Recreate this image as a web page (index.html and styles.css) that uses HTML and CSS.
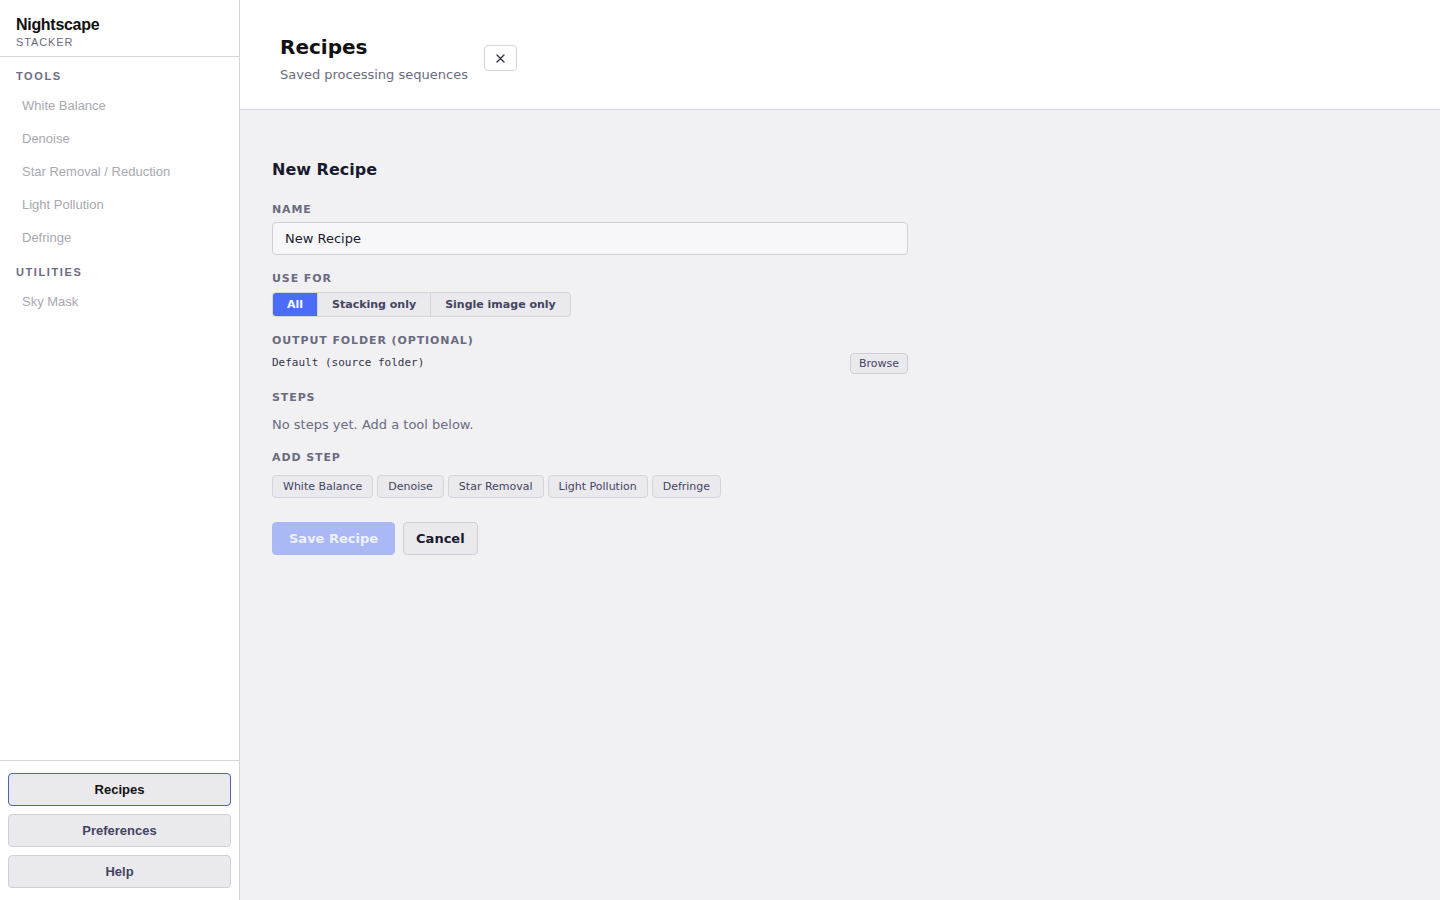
FILE: index.html
```html
<!DOCTYPE html>
<html>
<head>
<meta charset="utf-8">
<link rel="stylesheet" href="styles.css">
</head>
<body>
<div class="app">
  <aside class="sidebar">
    <div class="brand">
      <div class="brand-name">Nightscape</div>
      <div class="brand-sub">STACKER</div>
    </div>
    <nav class="nav">
      <div class="nav-head">TOOLS</div>
      <div class="nav-item">White Balance</div>
      <div class="nav-item">Denoise</div>
      <div class="nav-item">Star Removal / Reduction</div>
      <div class="nav-item">Light Pollution</div>
      <div class="nav-item">Defringe</div>
      <div class="nav-head">UTILITIES</div>
      <div class="nav-item">Sky Mask</div>
    </nav>
    <div class="side-foot">
      <button class="side-btn active">Recipes</button>
      <button class="side-btn">Preferences</button>
      <button class="side-btn">Help</button>
    </div>
  </aside>
  <main class="main">
    <header class="top">
      <div class="top-text">
        <h1 class="title">Recipes</h1>
        <div class="subtitle">Saved processing sequences</div>
      </div>
      <button class="close-btn" aria-label="Close"><svg width="9" height="9" viewBox="0 0 9 9"><path d="M1 1L8 8M8 1L1 8" stroke="#33334a" stroke-width="1.4" stroke-linecap="round"/></svg></button>
    </header>
    <section class="content">
      <div class="form">
        <h2 class="form-title">New Recipe</h2>
        <div class="field">
          <div class="label">NAME</div>
          <div class="input">New Recipe</div>
        </div>
        <div class="field">
          <div class="label">USE FOR</div>
          <div class="seg">
            <span class="seg-item on">All</span>
            <span class="seg-item">Stacking only</span>
            <span class="seg-item">Single image only</span>
          </div>
        </div>
        <div class="field">
          <div class="label">OUTPUT FOLDER (OPTIONAL)</div>
          <div class="folder-row">
            <span class="mono">Default (source folder)</span>
            <button class="small-btn">Browse</button>
          </div>
        </div>
        <div class="field">
          <div class="label">STEPS</div>
          <div class="empty">No steps yet. Add a tool below.</div>
        </div>
        <div class="field">
          <div class="label">ADD STEP</div>
          <div class="chips">
            <button class="chip">White Balance</button>
            <button class="chip">Denoise</button>
            <button class="chip">Star Removal</button>
            <button class="chip">Light Pollution</button>
            <button class="chip">Defringe</button>
          </div>
        </div>
        <div class="actions">
          <button class="btn primary">Save Recipe</button>
          <button class="btn">Cancel</button>
        </div>
      </div>
    </section>
  </main>
</div>
</body>
</html>
```
FILE: styles.css
```css
* { box-sizing: border-box; }
html, body { margin: 0; padding: 0; height: 100%; }
body { font-family: "DejaVu Sans", sans-serif; color: #1a1a2e; }
button { font-family: inherit; cursor: pointer; }
.app { display: flex; height: 900px; }

.sidebar {
  width: 240px; flex: none; background: #fff; border-right: 1px solid #d4d4dc;
  display: flex; flex-direction: column;
  font-family: "Liberation Sans", Arial, sans-serif;
}
.brand { padding: 15px 16px 8px; border-bottom: 1px solid #d4d4dc; height: 57px; }
.brand-name { font-size: 16px; font-weight: 700; color: #111; line-height: 19px; letter-spacing: -0.3px; }
.brand-sub { font-size: 11px; color: #6b6b85; letter-spacing: 0.9px; line-height: 14px; margin-top: 1px; }
.nav { flex: 1; padding-top: 12px; }
.nav-head { font-size: 11px; font-weight: 700; color: #6b6b85; letter-spacing: 1.6px; padding: 0 16px; height: 15px; line-height: 15px; margin-bottom: 5px; }
.nav-item { font-size: 13px; color: #a8a8b0; padding: 0 22px; height: 33px; line-height: 33px; }
.nav-item + .nav-head { margin-top: 11px; }
.side-foot { border-top: 1px solid #d4d4dc; padding: 12px 8px 12px; display: flex; flex-direction: column; gap: 8px; }
.side-btn {
  height: 33px; background: #e9e9ee; border: 1px solid #cfcfd8; border-radius: 4px;
  font-family: "Liberation Sans", Arial, sans-serif; font-size: 13px; font-weight: 700; color: #44445e;
}
.side-btn.active { border-color: #4f63a8; color: #111; }

.main { flex: 1; display: flex; flex-direction: column; background: #f1f1f4; }
.top { height: 110px; flex: none; background: #fff; border-bottom: 1px solid #d4d4dc; display: flex; align-items: flex-start; padding: 35px 40px 0; gap: 16px; }
.title { margin: 0; font-size: 20px; font-weight: 700; line-height: 24px; color: #111; }
.subtitle { font-size: 13px; color: #6b6b80; margin-top: 8px; line-height: 16px; }
.close-btn { margin-top: 10px; width: 33px; height: 26px; background: #fff; border: 1px solid #d4d4dc; border-radius: 4px; padding: 0; display: flex; align-items: center; justify-content: center; }

.content { padding: 50px 32px; }
.form { width: 636px; }
.form-title { margin: 0 0 22px; font-size: 16px; font-weight: 700; line-height: 20px; color: #1a1a2e; }
.field { margin-bottom: 16px; }
.label { font-size: 11px; font-weight: 700; color: #6b6b80; letter-spacing: 0.9px; line-height: 14px; padding-top: 1px; margin-bottom: 5px; }
.input { height: 33px; background: #f7f7f9; border: 1px solid #cfcfd8; border-radius: 4px; padding: 0 12px; font-size: 13px; line-height: 31px; color: #1a1a2e; }
.seg { display: inline-flex; border: 1px solid #d4d4dc; border-radius: 4px; overflow: hidden; height: 25px; background: #e9e9ee; margin-top: 1px; vertical-align: top; }
.seg-item { font-size: 11px; font-weight: 700; color: #44445e; padding: 0 14px; line-height: 23px; }
.seg-item + .seg-item { border-left: 1px solid #d4d4dc; }
.seg-item.on { background: #4a6cf7; color: #fff; }
.folder-row { display: flex; justify-content: space-between; align-items: center; }
.mono { font-family: "DejaVu Sans Mono", monospace; font-size: 11px; color: #33334a; margin-top: -3px; }
.small-btn { height: 21px; padding: 0 8px; font-size: 11px; background: #e9e9ee; border: 1px solid #cfcfd8; border-radius: 4px; color: #44445e; }
.empty { font-size: 13px; color: #6b6b80; line-height: 19px; padding-top: 1px; margin-top: 9px; }
.chips { display: flex; gap: 4px; margin-top: 10px; }
.chip { height: 23px; padding: 0 10px; font-size: 11px; background: #e9e9ee; border: 1px solid #d4d4dc; border-radius: 4px; color: #44445e; }
.actions { display: flex; gap: 8px; margin-top: 24px; }
.btn { height: 33px; padding: 0 12px; font-size: 13px; font-weight: 700; background: #e9e9ee; border: 1px solid #cfcfd8; border-radius: 4px; color: #1a1a2e; }
.btn.primary { background: #aab9f5; border-color: #aab9f5; color: #eef0fd; padding: 0 16px; }
```
